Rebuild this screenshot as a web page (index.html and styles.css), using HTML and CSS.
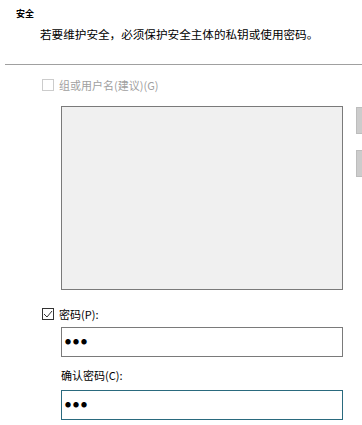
FILE: index.html
```html
<!DOCTYPE html>
<html lang="zh-CN">
<head>
  <meta charset="UTF-8">
  <title>安全</title>
  <link rel="stylesheet" href="styles.css">
</head>
<body>
  <div class="page">
    <div class="title">安全</div>
    <div class="desc">若要维护安全，必须保护安全主体的私钥或使用密码。</div>
    <div class="sep"></div>

    <div class="check-row disabled">
      <span class="box"></span>
      <span class="label">组或用户名(建议)(G)</span>
    </div>

    <div class="list-row">
      <div class="listbox"></div>
      <div class="side-buttons">
        <div class="side-btn"></div>
        <div class="side-btn"></div>
      </div>
    </div>

    <div class="check-row pwd">
      <span class="box checked">
        <svg width="12" height="12" viewBox="0 0 12 12">
          <polyline points="2,6 5,9 10,3" fill="none" stroke="#333" stroke-width="1"/>
        </svg>
      </span>
      <span class="label">密码(P):</span>
    </div>

    <div class="field">●●●</div>
    <div class="field-label">确认密码(C):</div>
    <div class="field focused">●●●</div>
  </div>
</body>
</html>
```

FILE: styles.css
```css
body {
  margin: 0;
  background: #ffffff;
  font-family: "Noto Sans CJK SC", "Liberation Sans", sans-serif;
  color: #000000;
  overflow: hidden;
}

.page {
  padding-top: 8px;
}

.title {
  margin-left: 16px;
  font-size: 9px;
  font-weight: bold;
  line-height: 12px;
}

.desc {
  margin-left: 40px;
  margin-top: 6px;
  font-size: 11.6px;
  line-height: 16px;
}

.sep {
  margin: 22px 0 0 5px;
  border-top: 1px solid #a0a0a0;
}

.check-row {
  display: flex;
  align-items: center;
  margin-left: 42px;
  height: 14px;
}

.check-row.disabled {
  margin-top: 13px;
  color: #a0a0a0;
}

.box {
  width: 10px;
  height: 10px;
  border: 1px solid #cccccc;
  background: #ffffff;
  margin-right: 5px;
  display: flex;
}

.box.checked {
  border-color: #333333;
}

.box svg {
  margin: -1px;
}

.label {
  font-size: 11px;
  line-height: 14px;
}

.list-row {
  display: flex;
  margin-top: 14px;
  overflow: hidden;
}

.listbox {
  flex-shrink: 0;
  margin-left: 61px;
  width: 280px;
  height: 182px;
  border: 1px solid #7a7a7a;
  background: #f0f0f0;
}

.side-buttons {
  flex-shrink: 0;
  margin-left: 13px;
  display: flex;
  flex-direction: column;
  gap: 16px;
  margin-top: 1px;
}

.side-btn {
  width: 10px;
  height: 25px;
  background: #cccccc;
  border: 1px solid #bdbdbd;
}

.check-row.pwd {
  margin-top: 17px;
}

.field {
  margin: 6px 0 0 61px;
  width: 277px;
  height: 28px;
  border: 1px solid #7a7a7a;
  padding-left: 3px;
  font-size: 6px;
  letter-spacing: 2px;
  line-height: 28px;
}

.field.focused {
  border-color: #2a6a7e;
  margin-top: 8px;
}

.field-label {
  margin: 11px 0 0 61px;
  font-size: 11px;
  line-height: 14px;
}
```
